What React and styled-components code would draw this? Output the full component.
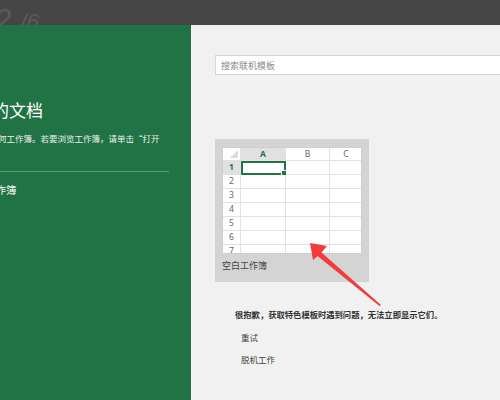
import React from "react";
import styled, { createGlobalStyle } from "styled-components";

const Global = createGlobalStyle`
  html, body { margin: 0; padding: 0; background: #f1f1f1; }
  body { font-family: "Noto Sans CJK SC", "Noto Sans", sans-serif; }
  * { box-sizing: border-box; }
`;

const Page = styled.div`
  position: relative;
  width: 500px;
  height: 400px;
  overflow: hidden;
  display: flex;
  flex-direction: column;
  background: #f1f1f1;
`;

const TopBar = styled.div`
  height: 25px;
  flex: none;
  background: #464646;
  overflow: hidden;
  display: flex;
  align-items: flex-start;
  padding: 4px 0 0 0;
`;

const Counter = styled.span`
  font-family: "Liberation Sans", sans-serif;
  color: #5a5a5a;
  display: flex;
  align-items: baseline;
  line-height: 1;
  margin-left: -4px;
`;

const Big = styled.span`
  font-size: 30px;
`;

const Small = styled.span`
  font-size: 22px;
  font-style: italic;
  margin-left: 8px;
`;

const Main = styled.div`
  flex: 1;
  display: flex;
  min-height: 0;
`;

const Left = styled.div`
  width: 191px;
  flex: none;
  background: #217346;
  color: #ffffff;
  overflow: hidden;
  display: flex;
  flex-direction: column;
  padding-top: 74px;
`;

const Title = styled.div`
  font-size: 17px;
  line-height: 22px;
  white-space: nowrap;
  margin-left: ${(p) => p.shift}px;
`;

const Desc = styled.div`
  font-size: 8.5px;
  line-height: 12px;
  white-space: nowrap;
  margin-top: 11px;
  margin-left: ${(p) => p.shift}px;
  color: #e8f1ec;
`;

const Rule = styled.div`
  height: 1px;
  width: 169px;
  background: #5d9a77;
  margin-top: 27px;
`;

const OpenLink = styled.div`
  font-size: 10.5px;
  line-height: 14px;
  white-space: nowrap;
  margin-top: 11px;
  margin-left: ${(p) => p.shift}px;
`;

const Split = styled.div`
  width: 1px;
  flex: none;
  background: #fafafa;
`;

const Right = styled.div`
  flex: 1;
  overflow: hidden;
  padding: 30px 0 0 23px;
  display: flex;
  flex-direction: column;
  align-items: flex-start;
`;

const Search = styled.div`
  width: 320px;
  height: 20px;
  background: #ffffff;
  border: 1px solid #d6d6d6;
  display: flex;
  align-items: center;
  padding-left: 5px;
  font-size: 9px;
  color: #8a8a8a;
`;

const Card = styled.div`
  margin-top: 64px;
  width: 154px;
  height: 143px;
  background: #d4d4d4;
  padding: 8px 7px 0 7px;
  display: flex;
  flex-direction: column;
`;

const Sheet = styled.div`
  width: 140px;
  height: 107px;
  background: #ffffff;
  overflow: hidden;
  display: grid;
  grid-template-columns: 18px 45px 44px 33px;
  grid-template-rows: 13px;
  grid-auto-rows: 14px;
  border: 1px solid #cfcfcf;
`;

const Cell = styled.div`
  position: relative;
  border-right: 1px solid #e2e2e2;
  border-bottom: 1px solid #e2e2e2;
  background: ${(p) => (p.hl ? "#e1e1e1" : "#ffffff")};
  font-family: "Noto Sans", sans-serif;
  font-size: 8.5px;
  color: ${(p) => (p.hl ? "#217346" : "#666666")};
  font-weight: ${(p) => (p.hl ? 700 : 400)};
  display: flex;
  align-items: center;
  justify-content: center;
  line-height: 1;
`;

const Corner = styled(Cell)`
  &::after {
    content: "";
    position: absolute;
    right: 2px;
    bottom: 2px;
    width: 0;
    height: 0;
    border-left: 8px solid transparent;
    border-bottom: 8px solid #dcdcdc;
  }
`;

const Selected = styled(Cell)`
  border: 2px solid #217346;
  &::after {
    content: "";
    position: absolute;
    right: -4px;
    bottom: -4px;
    width: 5px;
    height: 5px;
    background: #217346;
    border: 1px solid #ffffff;
  }
`;

const CardLabel = styled.div`
  font-size: 9px;
  color: #444444;
  margin-top: 6px;
  line-height: 12px;
`;

const Notice = styled.div`
  margin: 26px 0 0 20px;
  display: flex;
  flex-direction: column;
  gap: 10.5px;
`;

const NoticeText = styled.div`
  font-size: 8.3px;
  line-height: 12px;
  color: #333333;
  font-weight: 600;
  white-space: nowrap;
`;

const Action = styled.div`
  font-size: 8.5px;
  line-height: 12px;
  color: #444444;
  margin-left: 6px;
`;

const Overlay = styled.svg`
  position: absolute;
  left: 0;
  top: 0;
  pointer-events: none;
`;

const cols = ["", "A", "B", "C"];
const rows = [1, 2, 3, 4, 5, 6, 7];

function Spreadsheet() {
  const cells = [];
  cols.forEach((c, i) => {
    if (i === 0) cells.push(<Corner key="corner" />);
    else
      cells.push(
        <Cell key={"h" + c} hl={c === "A"}>
          {c}
        </Cell>
      );
  });
  rows.forEach((r) => {
    cells.push(
      <Cell key={"r" + r} hl={r === 1}>
        {r}
      </Cell>
    );
    for (let i = 1; i < cols.length; i++) {
      if (r === 1 && i === 1) cells.push(<Selected key="sel" />);
      else cells.push(<Cell key={r + "-" + i} />);
    }
  });
  return <Sheet>{cells}</Sheet>;
}

export default function App() {
  return (
    <>
      <Global />
      <Page>
        <TopBar>
          <Counter>
            <Big>2</Big>
            <Small>/6</Small>
          </Counter>
        </TopBar>
        <Main>
          <Left>
            <Title shift={-76}>最近使用的文档</Title>
            <Desc shift={-70}>你最近没有打开任何工作簿。若要浏览工作簿，请单击“打开</Desc>
            <Rule />
            <OpenLink shift={-57}>打开其他工作簿</OpenLink>
          </Left>
          <Split />
          <Right>
            <Search>搜索联机模板</Search>
            <Card>
              <Spreadsheet />
              <CardLabel>空白工作簿</CardLabel>
            </Card>
            <Notice>
              <NoticeText>很抱歉，获取特色模板时遇到问题，无法立即显示它们。</NoticeText>
              <Action>重试</Action>
              <Action>脱机工作</Action>
            </Notice>
          </Right>
        </Main>
        <Overlay width="500" height="400" viewBox="0 0 500 400">
          <polygon
            points="310,243 327,246 321.5,252.5 381,305 379.5,306 317.5,256 313,260"
            fill="#f23b3b"
          />
        </Overlay>
      </Page>
    </>
  );
}
